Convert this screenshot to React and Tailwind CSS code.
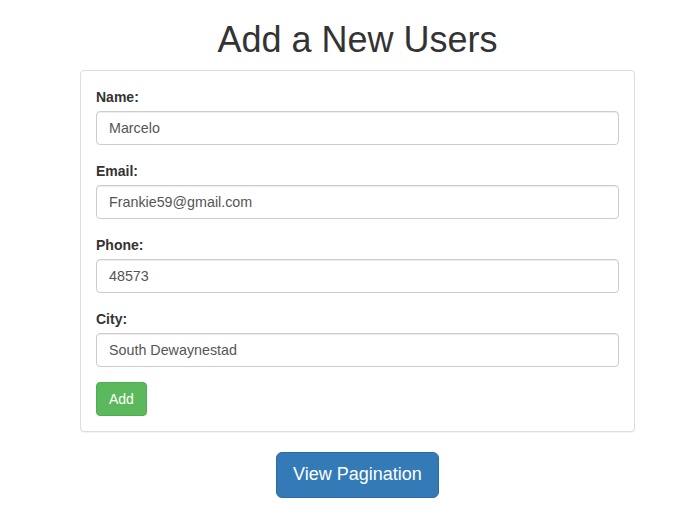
export default function App() {
  const fields = [
    { label: "Name:", value: "Marcelo" },
    { label: "Email:", value: "Frankie59@gmail.com" },
    { label: "Phone:", value: "48573" },
    { label: "City:", value: "South Dewaynestad" },
  ];
  return (
    <div
      className="min-h-[513px] bg-white text-[#333] text-[14px] leading-[20px]"
      style={{ fontFamily: '"Liberation Sans", Arial, Helvetica, sans-serif' }}
    >
      <div className="ml-[80px] w-[555px] flex flex-col items-center">
        <h1 className="mt-[20px] mb-[10px] text-[36px] leading-[1.1] font-normal text-center text-[#333]">
          Add a New Users
        </h1>
        <div className="w-full mb-[20px] bg-white border border-[#ddd] rounded-[4px] shadow-[0_1px_1px_rgba(0,0,0,0.05)] p-[15px]">
          {fields.map((f) => (
            <div key={f.label} className="mb-[15px]">
              <label className="block mb-[5px] pt-px h-[20px] font-bold text-[14px] leading-[20px] text-[#333]">
                {f.label}
              </label>
              <input
                readOnly
                value={f.value}
                className="block w-full h-[34px] px-[12px] py-[6px] text-[14.3px] leading-[20px] text-[#555] bg-white border border-[#ccc] rounded-[4px] shadow-[inset_0_1px_1px_rgba(0,0,0,0.075)] outline-none"
                style={{ fontFamily: '"Liberation Sans", Arial, Helvetica, sans-serif' }}
              />
            </div>
          ))}
          <button
            className="h-[34px] px-[12px] py-[6px] text-[14px] leading-[20px] text-white bg-[#5cb85c] border border-[#4cae4c] rounded-[4px]"
            style={{ fontFamily: '"Liberation Sans", Arial, Helvetica, sans-serif' }}
          >
            Add
          </button>
        </div>
        <button
          className="h-[46px] px-[16px] py-[10px] text-[18px] leading-[1.3333] text-white bg-[#337ab7] border border-[#2e6da4] rounded-[6px]"
          style={{ fontFamily: '"Liberation Sans", Arial, Helvetica, sans-serif' }}
        >
          View Pagination
        </button>
      </div>
    </div>
  );
}
